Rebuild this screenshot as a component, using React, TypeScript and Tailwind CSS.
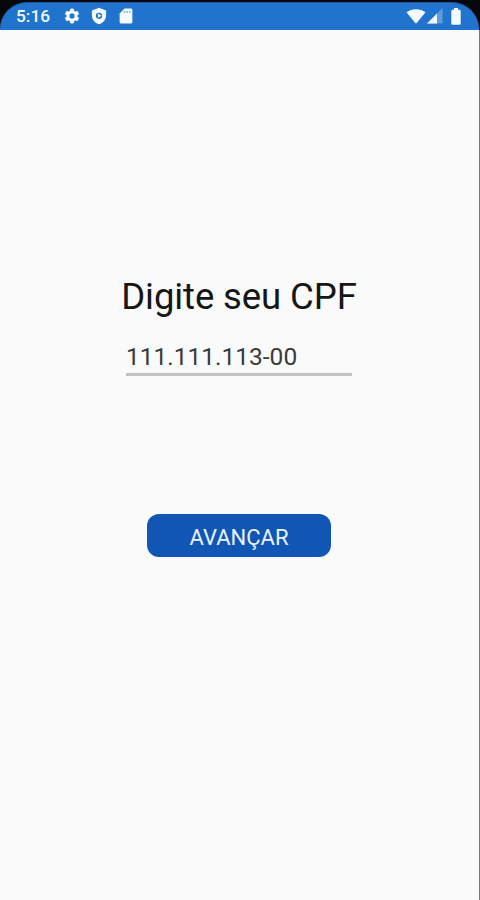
import React from "react";

function StatusBar() {
  return (
    <header className="h-[30px] bg-[#07080c] pt-[2px]">
      <div className="flex h-7 w-[479px] items-center rounded-t-[27px] border-t border-[#1b5299] bg-[#2074cd] pl-4 pr-[18px] text-[#f4faff]">
        <span className="w-[47px] text-[17.3px] font-medium leading-[27px]">5:16</span>
        <svg className="mb-px h-[18px] w-[18px]" viewBox="0 0 24 24" fill="currentColor">
          <path d="M19.14 12.94c.04-.3.06-.61.06-.94s-.02-.64-.07-.94l2.03-1.58c.18-.14.23-.41.12-.61l-1.92-3.32c-.12-.22-.37-.29-.59-.22l-2.39.96c-.5-.38-1.03-.7-1.62-.94l-.36-2.54A.48.48 0 0 0 13.92 2.4h-3.84c-.24 0-.43.17-.47.41l-.36 2.54c-.59.24-1.13.57-1.62.94l-2.39-.96c-.22-.08-.47 0-.59.22L2.74 8.87c-.12.21-.08.47.12.61l2.03 1.58c-.05.3-.09.63-.09.94s.02.64.07.94l-2.03 1.58c-.18.14-.23.41-.12.61l1.92 3.32c.12.22.37.29.59.22l2.39-.96c.5.38 1.03.7 1.62.94l.36 2.54c.05.24.24.41.48.41h3.84c.24 0 .44-.17.47-.41l.36-2.54c.59-.24 1.13-.56 1.62-.94l2.39.96c.22.08.47 0 .59-.22l1.92-3.32c.12-.22.07-.47-.12-.61l-2.01-1.58zM12 15.6A3.6 3.6 0 1 1 12 8.4a3.6 3.6 0 0 1 0 7.2z" stroke="currentColor" strokeWidth=".3" />
        </svg>
        <svg className="mb-px ml-[9px] h-[18px] w-[18px]" viewBox="0 0 24 24" fill="currentColor">
          <path fillRule="evenodd" d="M12 1 2.500 4.800V11c0 5.700 4 10.500 9.500 12 5.500-1.500 9.500-6.300 9.500-12V4.800L12 1zm0 6.500a4.200 4.200 0 1 1 0 8.400 4.200 4.200 0 0 1 0-8.400z" />
          <path d="m10.500 8.700 4.800 3-4.800 3z" />
        </svg>
        <svg className="mb-px ml-[9px] h-[18px] w-[18px]" viewBox="0 0 24 24" fill="currentColor">
          <path d="M18.500 2H10L3.500 8.500V20c0 1.100.9 2 2 2h13c1.100 0 2-.9 2-2V4c0-1.100-.9-2-2-2z" />
          <path fill="#2074cd" opacity=".45" d="M9 5h2v3H9zm3.500 0h2v3h-2zM16 5h2v3h-2z" />
        </svg>
        <svg className="ml-auto mb-px h-[16px] w-[20px]" viewBox="0 0 20 16" fill="currentColor">
          <path d="M.5 4.200C6 .2 14 .2 19.500 4.200L10.700 15q-.7.800-1.400 0z" />
        </svg>
        <svg className="mb-px ml-[1px] h-[16px] w-[16px]" viewBox="0 0 16 16" fill="currentColor">
          <path opacity=".3" d="M15.500 0v15.500H0z" />
          <path d="M10 5.500v10H0z" />
        </svg>
        <svg className="mb-px ml-[8px] h-[17px] w-[10px]" viewBox="0 0 10 17" fill="currentColor">
          <path d="M3 0h4v1.800h1.500q1.200 0 1.200 1.200v12.500q0 1.200-1.200 1.200h-7Q.3 16.700.3 15.500V3q0-1.200 1.200-1.200H3z" />
        </svg>
      </div>
    </header>
  );
}

export default function App() {
  return (
    <div className="h-[900px] w-[480px] overflow-hidden bg-[#fafafa] font-['Roboto',sans-serif]">
      <StatusBar />
      <main className="flex h-[870px] flex-col items-center border-r border-[#777777] pr-px pt-[243px]">
        <h1 className="whitespace-nowrap text-[36.5px] font-normal leading-[48px] tracking-[-0.1px] text-[#161616]">Digite seu CPF</h1>
        <input
          aria-label="CPF"
          defaultValue="111.111.113-00"
          className="mt-[16px] h-[39px] w-[226px] border-b-[3px] border-[#c2c2c2] bg-transparent pt-[2px] text-[24.5px] font-normal leading-[34px] text-[#3a3a3a] outline-none"
        />
        <button className="mt-[138px] h-[43px] w-[184px] rounded-[12px] bg-[#1256b5] pt-[5px] text-[22px] leading-[38px] text-[#e8f3ff]">
          AVANÇAR
        </button>
      </main>
    </div>
  );
}
